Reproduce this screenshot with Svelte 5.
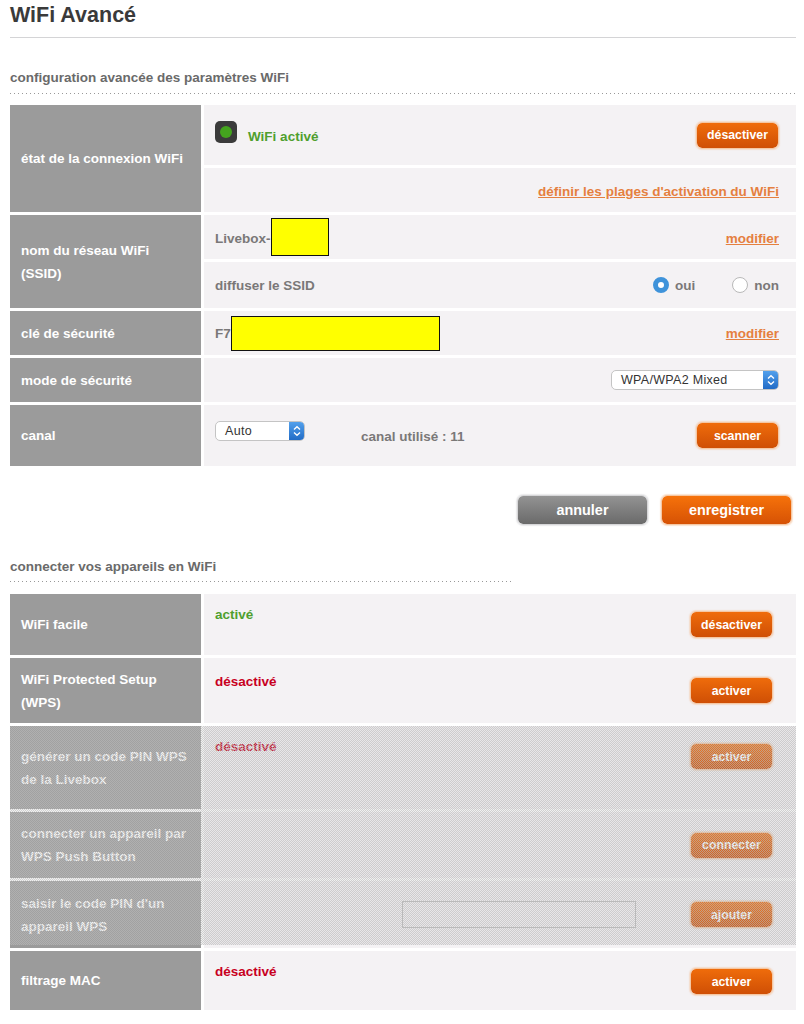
<script>
	// chevrons shared by both fake selects
</script>

{#snippet chevrons()}
	<span class="select-arrow">
		<svg width="8" height="12" viewBox="0 0 8 12" fill="none" stroke="#fff" stroke-width="1.4">
			<path d="M1 4.5 4 1.8 7 4.5" />
			<path d="M1 7.5 4 10.2 7 7.5" />
		</svg>
	</span>
{/snippet}

<div class="page">
	<h1>WiFi Avancé</h1>

	<h2 class="section-first">configuration avancée des paramètres WiFi</h2>
	<div class="dots"></div>

	<div class="row">
		<div class="label">état de la connexion WiFi</div>
		<div class="cells">
			<div class="cell h60">
				<span class="led"><span></span></span>
				<span class="green wifi-on">WiFi activé</span>
				<button type="button" class="btn push">désactiver</button>
			</div>
			<div class="cell h44 end">
				<a class="low" href="#plages">définir les plages d'activation du WiFi</a>
			</div>
		</div>
	</div>

	<div class="row">
		<div class="label">nom du réseau WiFi<br />(SSID)</div>
		<div class="cells">
			<div class="cell h44">
				<span class="muted low">Livebox-</span><span class="mask ssid-mask"></span>
				<a class="push low" href="#ssid">modifier</a>
			</div>
			<div class="cell h46">
				<span class="muted">diffuser le SSID</span>
				<span class="radio on push"></span><span class="muted radio-text">oui</span>
				<span class="radio off"></span><span class="muted radio-text">non</span>
			</div>
		</div>
	</div>

	<div class="row">
		<div class="label">clé de sécurité</div>
		<div class="cells">
			<div class="cell h44">
				<span class="muted">F7</span><span class="mask key-mask"></span>
				<a class="push" href="#cle">modifier</a>
			</div>
		</div>
	</div>

	<div class="row">
		<div class="label">mode de sécurité</div>
		<div class="cells">
			<div class="cell h44 end">
				<div class="select wide">WPA/WPA2 Mixed{@render chevrons()}</div>
			</div>
		</div>
	</div>

	<div class="row">
		<div class="label">canal</div>
		<div class="cells">
			<div class="cell h61">
				<div class="select narrow">Auto{@render chevrons()}</div>
				<span class="muted used">canal utilisé : 11</span>
				<button type="button" class="btn push">scanner</button>
			</div>
		</div>
	</div>

	<div class="actions">
		<button type="button" class="btn big grey">annuler</button>
		<button type="button" class="btn big">enregistrer</button>
	</div>

	<h2 class="section-second">connecter vos appareils en WiFi</h2>
	<div class="dots short"></div>

	<div class="devices">
		<div class="row">
			<div class="label">WiFi facile</div>
			<div class="cells">
				<div class="cell h61 top">
					<span class="green status">activé</span>
					<button type="button" class="btn push lower">désactiver</button>
				</div>
			</div>
		</div>

		<div class="row">
			<div class="label">WiFi Protected Setup<br />(WPS)</div>
			<div class="cells">
				<div class="cell h65 top">
					<span class="red status wps">désactivé</span>
					<button type="button" class="btn push lower wps">activer</button>
				</div>
			</div>
		</div>

		<div class="disabled">
			<div class="row">
				<div class="label">générer un code PIN WPS<br />de la Livebox</div>
				<div class="cells">
					<div class="cell h83 top">
						<span class="red status">désactivé</span>
						<button type="button" class="btn push lower">activer</button>
					</div>
				</div>
			</div>

			<div class="row">
				<div class="label">connecter un appareil par<br />WPS Push Button</div>
				<div class="cells">
					<div class="cell h66">
						<button type="button" class="btn push">connecter</button>
					</div>
				</div>
			</div>

			<div class="row">
				<div class="label">saisir le code PIN d'un<br />appareil WPS</div>
				<div class="cells">
					<div class="cell h67">
						<input class="pin-input push" type="text" />
						<button type="button" class="btn add">ajouter</button>
					</div>
				</div>
			</div>
		</div>

		<div class="row">
			<div class="label">filtrage MAC</div>
			<div class="cells">
				<div class="cell h59 top">
					<span class="red status">désactivé</span>
					<button type="button" class="btn push lower">activer</button>
				</div>
			</div>
		</div>
	</div>
</div>

<style>
	:global(body) {
		background: #fff;
		font-family: 'Liberation Sans', Arial, sans-serif;
	}

	.page {
		padding: 0 8px 0 10px;
		height: 1024px;
		box-sizing: border-box;
		overflow: hidden;
	}

	h1 {
		margin: 0;
		padding-top: 3px;
		height: 34px;
		font-size: 21.5px;
		line-height: 24px;
		color: #3a3a3a;
		border-bottom: 1px solid #d4d4d6;
	}

	h2 {
		margin: 0;
		font-size: 13.5px;
		line-height: 16px;
		color: #6a6a6a;
	}

	.section-first {
		padding-top: 32px;
	}

	.section-second {
		padding-top: 34px;
	}

	.dots {
		height: 1px;
		margin: 7px 0 11px;
		background: repeating-linear-gradient(90deg, #999 0 1px, transparent 1px 4px);
	}

	.dots.short {
		width: 502px;
		margin: 6px 0 12px;
	}

	.row {
		display: grid;
		grid-template-columns: 191px 1fr;
		gap: 3px;
		margin-bottom: 3px;
	}

	.label {
		display: flex;
		align-items: center;
		padding: 0 11px;
		background: #9b9b9b;
		color: #fff;
		font-size: 13.5px;
		font-weight: bold;
		line-height: 23px;
	}

	.cells {
		display: flex;
		flex-direction: column;
		gap: 3px;
	}

	.cell {
		display: flex;
		align-items: center;
		padding: 0 17px 0 11px;
		background: #f4f2f4;
		font-size: 13.5px;
		font-weight: bold;
		box-sizing: border-box;
	}

	.devices .cell {
		padding-right: 23px;
	}

	.cell.top {
		align-items: flex-start;
	}

	.cell.end {
		justify-content: flex-end;
	}

	.h44 {
		height: 44px;
	}

	.h46 {
		height: 46px;
	}

	.h59 {
		height: 59px;
	}

	.h60 {
		height: 60px;
	}

	.h61 {
		height: 61px;
	}

	.h65 {
		height: 65px;
	}

	.h66 {
		height: 66px;
	}

	.h67 {
		height: 67px;
	}

	.h83 {
		height: 83px;
	}

	.push {
		margin-left: auto;
	}

	.low {
		margin-top: 2px;
	}

	.muted {
		color: #7a7878;
	}

	.green {
		color: #4f9f2e;
	}

	.red {
		color: #c8001e;
	}

	.status {
		margin-top: 13px;
		line-height: 16px;
	}

	.status.wps {
		margin-top: 16px;
	}

	.led {
		display: flex;
		align-items: center;
		justify-content: center;
		width: 22px;
		height: 22px;
		margin-top: -6px;
		border-radius: 5px;
		background: #3b3b3b;
	}

	.led span {
		width: 12px;
		height: 12px;
		border-radius: 50%;
		background: #44a41e;
	}

	.wifi-on {
		margin-left: 11px;
		margin-top: 2px;
	}

	a {
		color: #e5803f;
		text-decoration: underline;
	}

	.mask {
		display: inline-block;
		box-sizing: border-box;
		background: #ffff00;
		border: 1px solid #111;
	}

	.ssid-mask {
		width: 58px;
		height: 38px;
		margin-top: -1px;
	}

	.key-mask {
		width: 209px;
		height: 35px;
		margin-top: 1px;
	}

	.radio {
		display: inline-block;
		box-sizing: border-box;
		width: 16px;
		height: 16px;
		border-radius: 50%;
	}

	.radio.on {
		border: 5px solid #3f93da;
		background: #fff;
	}

	.radio.off {
		margin-left: 37px;
		border: 1px solid #b9b9b9;
		background: #fff;
	}

	.radio-text {
		margin-left: 6px;
	}

	.select {
		position: relative;
		box-sizing: border-box;
		height: 20px;
		padding-left: 9px;
		border: 1px solid #c4c4c4;
		border-radius: 5px;
		background: #fff;
		color: #333;
		font-size: 12.5px;
		font-weight: normal;
		line-height: 18px;
		letter-spacing: 0.3px;
		overflow: hidden;
	}

	.select.wide {
		width: 168px;
	}

	.select.narrow {
		width: 90px;
		margin-top: -10px;
	}

	.select-arrow {
		position: absolute;
		top: -1px;
		right: -1px;
		display: flex;
		align-items: center;
		justify-content: center;
		width: 16px;
		height: 20px;
		background: linear-gradient(#55a3ee, #1f69c4);
	}

	.used {
		margin-left: 56px;
		margin-top: 1px;
	}

	.btn {
		box-sizing: border-box;
		width: 83px;
		height: 27px;
		padding: 0;
		border: 1px solid #f5c7a3;
		border-radius: 6px;
		background: linear-gradient(#ef6c0b, #cf4f05);
		background-clip: padding-box;
		box-shadow: 0 0 1px 1px rgba(245, 199, 163, 0.5);
		color: #fff;
		font-family: inherit;
		font-size: 12.3px;
		font-weight: bold;
	}

	.btn.lower {
		margin-top: 17px;
	}

	.btn.lower.wps {
		margin-top: 19px;
	}

	.btn.add {
		margin-left: 54px;
	}

	.actions {
		display: flex;
		justify-content: flex-end;
		gap: 13px;
		margin-top: 29px;
		padding-right: 4px;
	}

	.btn.big {
		width: 131px;
		height: 30px;
		font-size: 14.4px;
		background: linear-gradient(#f6720a, #d65205);
		background-clip: padding-box;
	}

	.btn.big.grey {
		border-color: #d6d6d8;
		background: linear-gradient(#939393, #6a6a6a);
		background-clip: padding-box;
		box-shadow: 0 0 1px 1px rgba(214, 214, 216, 0.5);
	}

	.pin-input {
		box-sizing: border-box;
		width: 234px;
		height: 27px;
		border: 1px solid #bbb;
		background: #f4f2f4;
	}

	.disabled {
		position: relative;
	}

	/* dither over the rows that can't be used yet, gaps included */
	.disabled::after {
		content: '';
		position: absolute;
		inset: 0 0 3px 0;
		background-color: rgba(186, 186, 186, 0.2);
		background-image: conic-gradient(
			rgba(186, 186, 186, 0.6) 25%,
			transparent 0 50%,
			rgba(186, 186, 186, 0.6) 0 75%,
			transparent 0
		);
		background-size: 2px 2px;
	}
</style>
